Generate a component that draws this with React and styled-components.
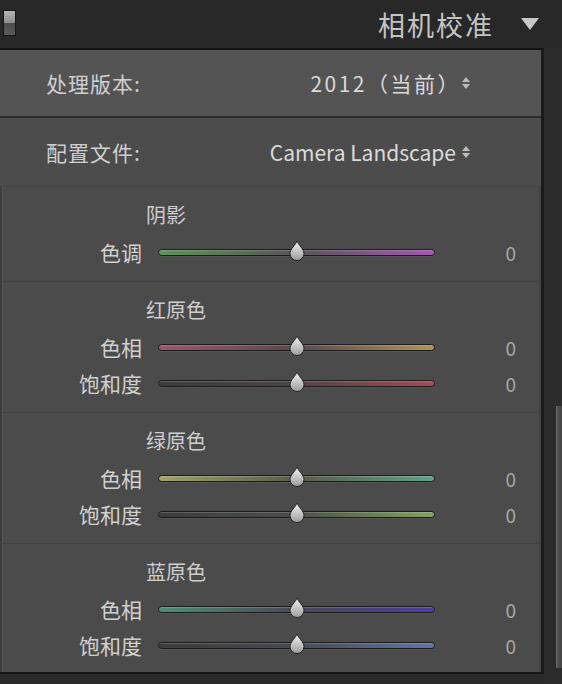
import React from "react";
import styled, { createGlobalStyle } from "styled-components";

const Global = createGlobalStyle`
  html, body { margin: 0; padding: 0; background: #2a2a2a; }
  body { font-family: "Noto Sans CJK SC", "Noto Sans", sans-serif; }
`;

const Frame = styled.div`
  width: 562px; height: 684px; overflow: hidden;
  display: flex; flex-direction: column; background: #2a2a2a;
`;

const Header = styled.header`
  height: 48px; flex-shrink: 0; display: flex; align-items: center;
  padding: 0 22px 0 3px; background: #282828;
`;
const SoloIcon = styled.span`
  width: 11px; height: 24px; border: 1px solid #151515; margin-top: -2px;
  background: linear-gradient(#b4b4b4 0%, #8e8e8e 48%, #4e4e4e 52%, #5a5a5a 100%);
`;
const Title = styled.h1`
  flex: 1; margin: 0; text-align: right; font-size: 27px; font-weight: 400;
  letter-spacing: 2px; color: #c4c4c4;
`;
const Collapse = styled.svg` width: 20px; height: 14px; margin-left: 26px; `;

const Body = styled.div` flex: 1; display: flex; min-height: 0; `;

const Panel = styled.div`
  width: 541px; height: 622px; flex-shrink: 0; background: #4b4b4b;
  border-top: 2px solid #141414; border-right: 3px solid #1b1b1b; border-bottom: 2px solid #161616;
  box-shadow: inset 2px 0 0 #3d3d3d, inset 3px 0 0 #575757, inset -2px 0 0 #444;
  display: flex; flex-direction: column;
`;

const Gutter = styled.div`
  flex: 1; display: flex; justify-content: flex-end; background: #2c2c2c;
`;
const ScrollThumb = styled.div`
  width: 6px; height: 262px; margin-top: 358px;
  background: linear-gradient(90deg, #6a6a6a, #4c4c4c 40%, #454545);
`;

const SelectRow = styled.div`
  height: ${({ $h }) => $h}px; flex-shrink: 0; display: flex; align-items: center;
  padding: 0 70px 0 46px; background: ${({ $bg }) => $bg};
  border-bottom: ${({ $line }) => $line};
`;
const SelectLabel = styled.span`
  flex: 1; font-size: 21px; letter-spacing: 1px; color: #cfcfcf;
`;
const SelectValue = styled.span`
  display: flex; align-items: center; gap: ${({ $gap }) => $gap}px;
  font-size: 21px; letter-spacing: ${({ $track }) => $track}px; color: #dadada;
`;
const Stepper = styled.svg` width: 10px; height: 14px; `;

const Section = styled.section`
  padding: 13px 0 11px; border-top: 1px solid #434343;
  &:first-of-type { border-top: none; }
`;
const Heading = styled.div`
  height: 30px; line-height: 30px; padding-left: 146px; margin-bottom: 4px;
  font-size: 20px; color: #cecece;
`;
const SliderRow = styled.div`
  height: 36px; display: grid; grid-template-columns: 142px 277px 1fr;
  column-gap: 16px; align-items: center;
`;
const SliderLabel = styled.span` text-align: right; font-size: 21px; color: #d0d0d0; `;
const Track = styled.div`
  position: relative; height: 5px; border: 1px solid #1c1c1c; border-radius: 4px;
  background: linear-gradient(90deg, ${({ $from }) => $from}, ${({ $mid }) => $mid} 50%, ${({ $to }) => $to});
  box-shadow: inset 0 1px 0 rgba(255, 255, 255, 0.18), 0 1px 0 rgba(255, 255, 255, 0.06);
`;
const Thumb = styled.svg`
  position: absolute; left: 50%; top: -10px; width: 17px; height: 21px;
  transform: translateX(-50%);
`;
const Value = styled.span`
  text-align: right; padding-right: 25px; font-size: 19px; color: #a6a6a6;
`;

const sections = [
  { title: "阴影", rows: [
    { label: "色调", from: "#5e9656", mid: "#565656", to: "#a658b4" },
  ] },
  { title: "红原色", rows: [
    { label: "色相", from: "#a05470", mid: "#584a4a", to: "#b0945a" },
    { label: "饱和度", from: "#3c3c3c", mid: "#4e4446", to: "#a84a56" },
  ] },
  { title: "绿原色", rows: [
    { label: "色相", from: "#a2a46a", mid: "#585a4a", to: "#62a288" },
    { label: "饱和度", from: "#3c3c3c", mid: "#4a5046", to: "#82a464" },
  ] },
  { title: "蓝原色", rows: [
    { label: "色相", from: "#4c9074", mid: "#474a58", to: "#4c3ca2" },
    { label: "饱和度", from: "#3c3c3c", mid: "#464a52", to: "#6276a4" },
  ] },
];

const StepIcon = () => (
  <Stepper viewBox="0 0 10 14">
    <path d="M5 1 L9 6 H1 Z M5 13 L9 8 H1 Z" fill="#bdbdbd" />
  </Stepper>
);

const Slider = ({ from, mid, to }) => (
  <Track $from={from} $mid={mid} $to={to}>
    <Thumb viewBox="0 0 17 21">
      <defs>
        <linearGradient id="knob" x1="0" y1="0" x2="0" y2="1">
          <stop offset="0" stopColor="#f2f2f2" />
          <stop offset="1" stopColor="#9c9c9c" />
        </linearGradient>
      </defs>
      <path d="M8.5 1 C9.5 4.5 15.5 9 15.5 13.5 A7 7 0 0 1 1.5 13.5 C1.5 9 7.5 4.5 8.5 1 Z"
        fill="url(#knob)" stroke="#262626" strokeWidth="1" />
    </Thumb>
  </Track>
);

export default function App() {
  return (
    <Frame>
      <Global />
      <Header>
        <SoloIcon />
        <Title>相机校准</Title>
        <Collapse viewBox="0 0 20 14">
          <path d="M1 1 H19 L10 13 Z" fill="#c8c8c8" />
        </Collapse>
      </Header>
      <Body>
        <Panel>
          <SelectRow $h={66} $bg="#545454" $line="2px solid #2b2b2b">
            <SelectLabel>处理版本:</SelectLabel>
            <SelectValue $gap={0} $track={2.5}>2012（当前）<StepIcon /></SelectValue>
          </SelectRow>
          <SelectRow $h={68} $bg="#4c4c4c" $line="1px solid #434343">
            <SelectLabel>配置文件:</SelectLabel>
            <SelectValue $gap={5} $track={0}>Camera Landscape<StepIcon /></SelectValue>
          </SelectRow>
          {sections.map((s) => (
            <Section key={s.title}>
              <Heading>{s.title}</Heading>
              {s.rows.map((r) => (
                <SliderRow key={r.label}>
                  <SliderLabel>{r.label}</SliderLabel>
                  <Slider from={r.from} mid={r.mid} to={r.to} />
                  <Value>0</Value>
                </SliderRow>
              ))}
            </Section>
          ))}
        </Panel>
        <Gutter>
          <ScrollThumb />
        </Gutter>
      </Body>
    </Frame>
  );
}
